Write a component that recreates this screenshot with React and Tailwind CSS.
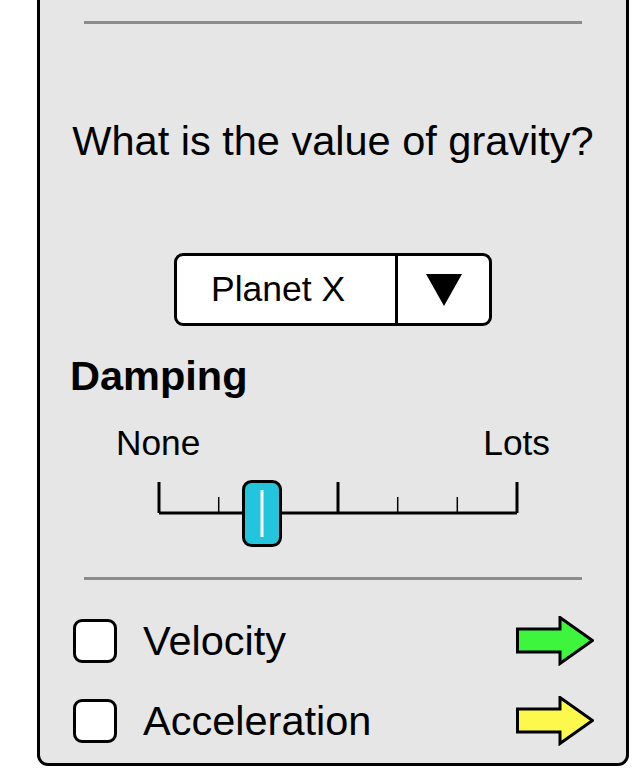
import React from 'react';

const TICKS = [43, 102.7, 162.3, 222, 281.7, 341.3, 401];

function Arrow({ fill }) {
  return (
    <svg width="78" height="50" viewBox="0 0 78 50">
      <polygon
        points="1.5,13 44,13 44,1.5 76.5,24.5 44,47.5 44,36 1.5,36"
        fill={fill}
        stroke="#000"
        strokeWidth="3"
        strokeLinejoin="miter"
      />
    </svg>
  );
}

function DampingSlider() {
  return (
    <svg width="434" height="72" viewBox="0 0 434 72" className="mx-auto mt-[15px] block">
      <line x1="43" y1="35" x2="401" y2="35" stroke="#000" strokeWidth="3" />
      {TICKS.map((x, i) => (
        <line
          key={i}
          x1={x}
          x2={x}
          y1={i % 3 === 0 ? 4 : 19}
          y2="35"
          stroke="#000"
          strokeWidth={i % 3 === 0 ? 3 : 1.5}
        />
      ))}
      <rect x="127.5" y="3.5" width="37" height="64" rx="8" fill="#22c5db" stroke="#000" strokeWidth="3" />
      <line x1="146" y1="12" x2="146" y2="59" stroke="#fff" strokeWidth="3" />
    </svg>
  );
}

function CheckRow({ label, color, className }) {
  return (
    <div className={`flex h-[50px] items-center pl-[33px] pr-[32px] ${className}`}>
      <div className="h-[44px] w-[44px] rounded-[9px] border-[3px] border-black bg-white" />
      <span className="ml-[26px] text-[41.5px] leading-[50px] text-black">{label}</span>
      <div className="ml-auto">
        <Arrow fill={color} />
      </div>
    </div>
  );
}

export default function App() {
  return (
    <div className="h-[780px] w-[640px] bg-white" style={{ fontFamily: '"Liberation Sans", Arial, sans-serif' }}>
      <div className="ml-[37px] w-[592px] rounded-b-[11px] border-x-[3px] border-b-[3px] border-black bg-[#e6e6e6] pb-[17px] pt-[21px]">
        <div className="mx-[44px] h-[3px] bg-[#8c8c8c]" />

        <div className="mt-[93px] text-center text-[41.5px] leading-[48px] text-black">What is the value of gravity?</div>

        <div className="mx-auto mt-[88px] flex h-[73px] w-[318px] overflow-hidden rounded-[9px] border-[3px] border-black bg-white">
          <div className="flex w-[218px] items-center pl-[34px] text-[35.5px] leading-[67px] text-black">Planet X</div>
          <div className="w-[3px] bg-black" />
          <div className="flex flex-1 items-center justify-center">
            <svg width="36" height="32" viewBox="0 0 36 32">
              <polygon points="0,0 36,0 18,32" fill="#000" />
            </svg>
          </div>
        </div>

        <div className="mt-[27px] pl-[30px] text-[41.5px] font-bold leading-[46px] text-black">Damping</div>

        <div className="mx-auto mt-[24px] flex w-[434px] justify-between text-[35.3px] leading-[40px] text-black">
          <span>None</span>
          <span>Lots</span>
        </div>

        <DampingSlider />

        <div className="mx-[44px] mt-[27px] h-[3px] bg-[#8c8c8c]" />

        <CheckRow label="Velocity" color="#3ef53e" className="mt-[36px]" />
        <CheckRow label="Acceleration" color="#fcf84c" className="mt-[30px]" />
      </div>
    </div>
  );
}
